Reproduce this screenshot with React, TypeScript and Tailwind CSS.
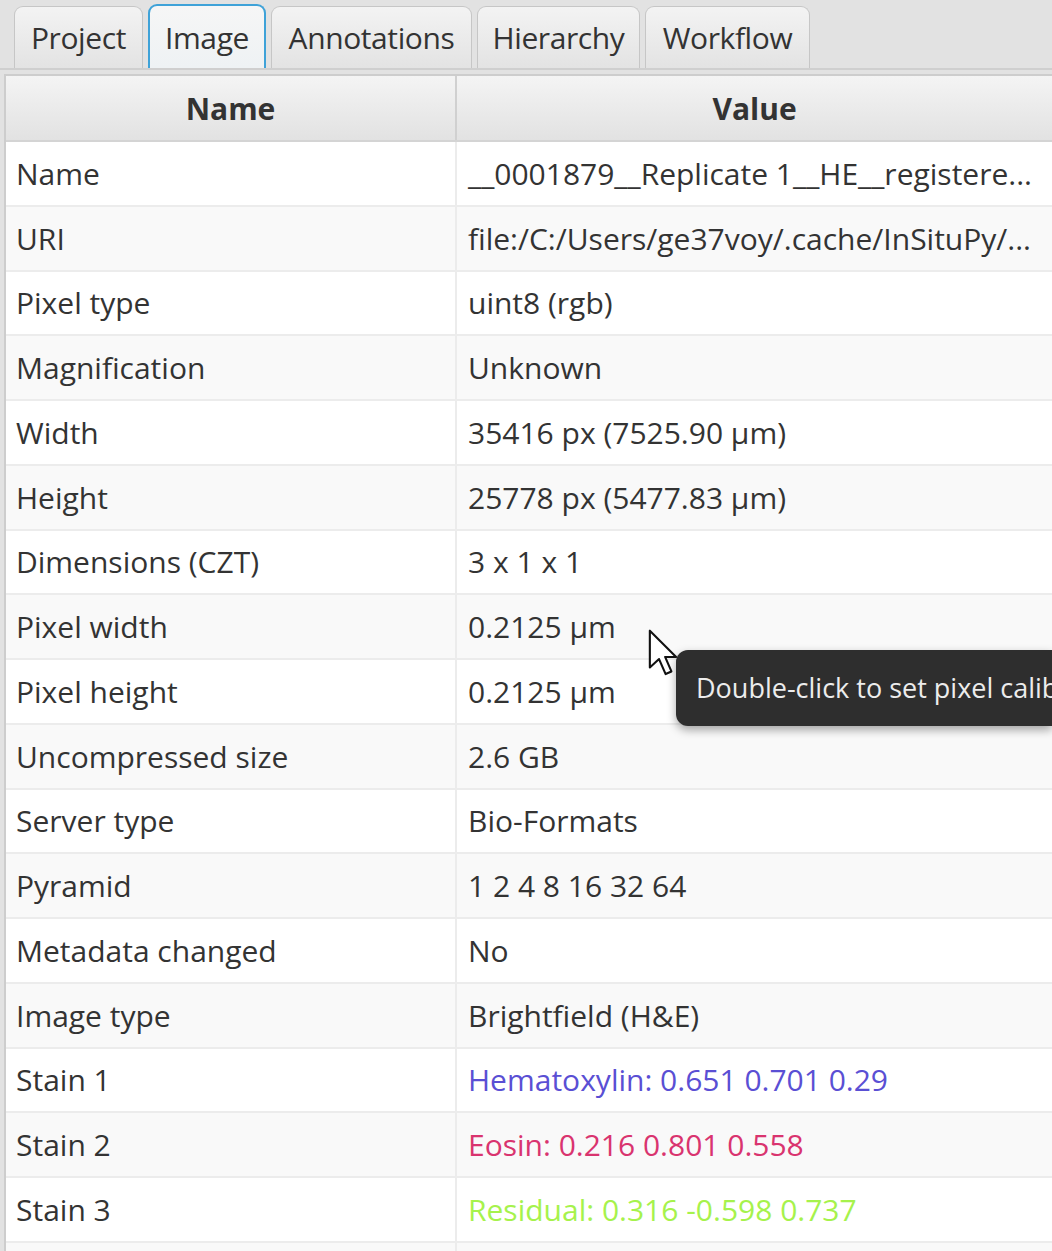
import React from 'react';

const tabs = [
  { label: 'Project', width: 'w-[129px]' },
  { label: 'Image', width: 'w-[118px]', active: true },
  { label: 'Annotations', width: 'w-[201px]' },
  { label: 'Hierarchy', width: 'w-[163px]' },
  { label: 'Workflow', width: 'w-[165px]' },
];

const rows: { name: string; value: string; color?: string }[] = [
  { name: 'Name', value: '__0001879__Replicate 1__HE__registere...' },
  { name: 'URI', value: 'file:/C:/Users/ge37voy/.cache/InSituPy/...' },
  { name: 'Pixel type', value: 'uint8 (rgb)' },
  { name: 'Magnification', value: 'Unknown' },
  { name: 'Width', value: '35416 px (7525.90 µm)' },
  { name: 'Height', value: '25778 px (5477.83 µm)' },
  { name: 'Dimensions (CZT)', value: '3 x 1 x 1' },
  { name: 'Pixel width', value: '0.2125 µm' },
  { name: 'Pixel height', value: '0.2125 µm' },
  { name: 'Uncompressed size', value: '2.6 GB' },
  { name: 'Server type', value: 'Bio-Formats' },
  { name: 'Pyramid', value: '1 2 4 8 16 32 64' },
  { name: 'Metadata changed', value: 'No' },
  { name: 'Image type', value: 'Brightfield (H&E)' },
  { name: 'Stain 1', value: 'Hematoxylin: 0.651 0.701 0.29', color: 'text-[#5a4fd4]' },
  { name: 'Stain 2', value: 'Eosin: 0.216 0.801 0.558', color: 'text-[#d9346f]' },
  { name: 'Stain 3', value: 'Residual: 0.316 -0.598 0.737', color: 'text-[#a6f24c]' },
  { name: '', value: '' },
];

const Cursor = () => (
  <svg width="34" height="50" viewBox="0 0 12 19" className="absolute left-[646px] top-[628px]">
    <path
      d="M1 1 L1 15 L4.5 11.8 L7 17.5 L9.2 16.5 L6.8 11 L11 11 Z"
      fill="#ffffff"
      stroke="#111111"
      strokeWidth="0.8"
      strokeLinejoin="round"
    />
  </svg>
);

export default function App() {
  return (
    <div
      className="relative w-[1052px] h-[1251px] overflow-hidden bg-[#e2e2e2] text-[#333333]"
      style={{ fontFamily: '"Open Sans", "Noto Sans", sans-serif' }}
    >
      {/* Tab strip */}
      <div className="flex items-end h-[70px] pl-[14px] gap-[5px] border-b-2 border-[#cfcfcf]">
        {tabs.map((t) => (
          <div
            key={t.label}
            className={
              t.active
                ? `${t.width} h-[64px] flex items-center justify-center rounded-t-[9px] border-2 border-b-0 border-[#3ea2d8] bg-gradient-to-b from-[#f6f6f6] to-[#eef2f4] text-[30px] tracking-[-0.4px]`
                : `${t.width} h-[62px] flex items-center justify-center rounded-t-[9px] border border-b-0 border-[#c6c6c6] bg-gradient-to-b from-[#f3f3f3] to-[#e3e3e3] text-[30px] tracking-[-0.4px]`
            }
          >
            {t.label}
          </div>
        ))}
      </div>

      {/* Table */}
      <div className="ml-[4px] mt-[4px] border-l-2 border-t-2 border-[#cdcdcd] bg-white">
        <div className="flex h-[66px] bg-gradient-to-b from-[#f4f4f4] to-[#e2e2e2] border-b-2 border-[#d4d4d4]">
          <div className="w-[451px] flex items-center justify-center font-bold text-[30px] border-r-2 border-[#d0d0d0]">
            Name
          </div>
          <div className="flex-1 flex items-center justify-center font-bold text-[30px]">Value</div>
        </div>
        {rows.map((r, i) => (
          <div
            key={i}
            className={`flex h-[64.75px] border-b-2 border-[#ececec] ${i % 2 === 0 ? 'bg-white' : 'bg-[#f9f9f9]'}`}
          >
            <div className="w-[451px] flex items-center pl-[10px] text-[30px] border-r-2 border-[#ececec] whitespace-nowrap">
              {r.name}
            </div>
            <div
              className={`flex-1 flex items-center pl-[11px] text-[30px] whitespace-nowrap overflow-hidden ${r.color ?? ''}`}
            >
              {r.value}
            </div>
          </div>
        ))}
      </div>

      {/* Tooltip, clipped by the window edge as in the capture */}
      <div className="absolute left-[676px] top-[650px] w-[376px] h-[76px] rounded-l-[12px] bg-[#2e2e2e] shadow-[0_4px_10px_rgba(0,0,0,0.35)] flex items-center pl-[20px] text-[27px] text-[#ececec] whitespace-nowrap overflow-hidden">
        Double-click to set pixel calib
      </div>

      <Cursor />
    </div>
  );
}
